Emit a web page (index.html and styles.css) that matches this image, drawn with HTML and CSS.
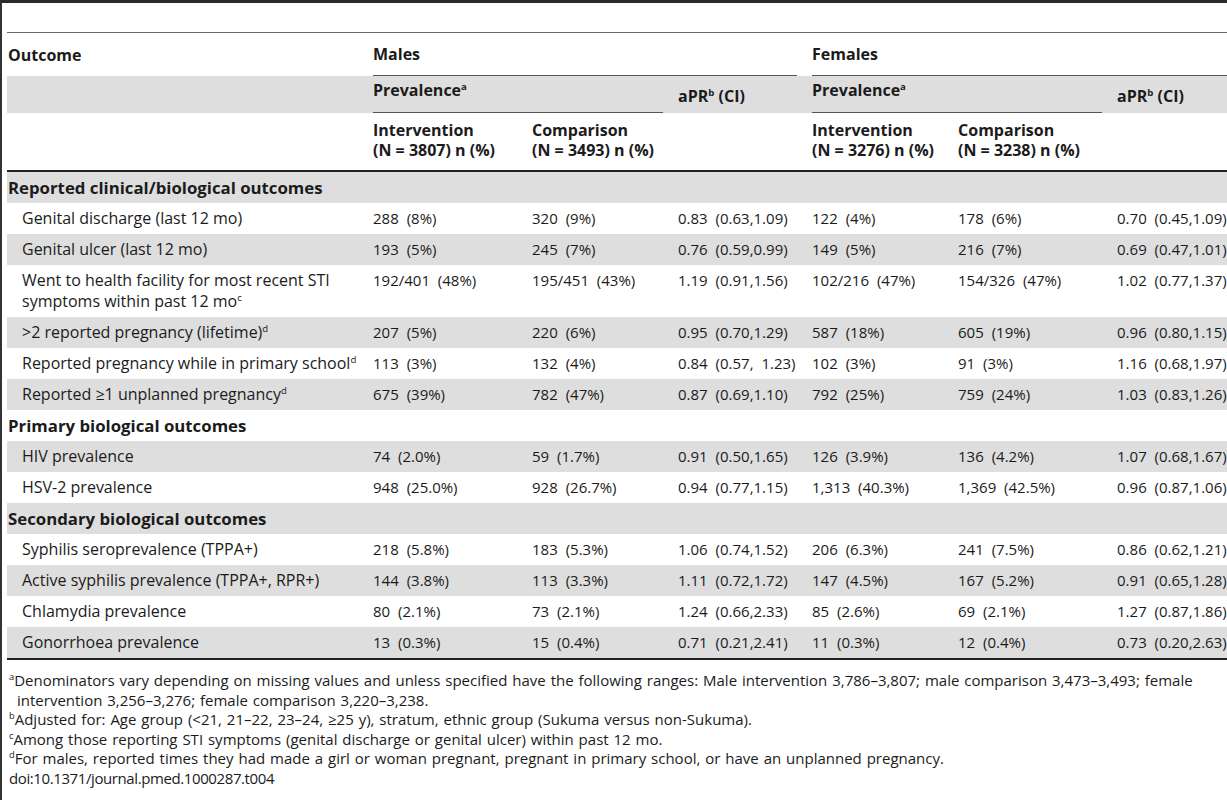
FILE: index.html
```html
<!DOCTYPE html>
<html>

<head>
    <meta charset="utf-8" />
    <title>Table 4</title>
    <link rel="stylesheet" href="styles.css">
</head>

<body>
    <div class="sheet">
        <table class="tbl">
            <colgroup>
                <col class="c-out">
                <col class="c-int">
                <col class="c-cmp">
                <col class="c-apr">
                <col class="c-int2">
                <col class="c-cmp2">
                <col class="c-apr2">
            </colgroup>
            <thead>
                <tr class="head-1">
                    <th class="outcome">Outcome</th>
                    <th colspan="3"><div class="grp">Males</div></th>
                    <th colspan="3"><div class="grp last">Females</div></th>
                </tr>
                <tr class="head-2">
                    <th></th>
                    <th colspan="2"><div class="grp sub">Prevalence<sup>a</sup></div></th>
                    <th class="apr">aPR<sup>b</sup> (CI)</th>
                    <th colspan="2"><div class="grp sub">Prevalence<sup>a</sup></div></th>
                    <th class="apr">aPR<sup>b</sup> (CI)</th>
                </tr>
                <tr class="head-3">
                    <th></th>
                    <th>Intervention<br>(N = 3807) n (%)</th>
                    <th>Comparison<br>(N = 3493) n (%)</th>
                    <th></th>
                    <th>Intervention<br>(N = 3276) n (%)</th>
                    <th>Comparison<br>(N = 3238) n (%)</th>
                    <th></th>
                </tr>
            </thead>
            <tbody>
                <tr class="section"><td colspan="7">Reported clinical/biological outcomes</td></tr>
                <tr>
                    <td class="label">Genital discharge (last 12 mo)</td>
                    <td>288 (8%)</td><td>320 (9%)</td><td>0.83 (0.63,1.09)</td>
                    <td>122 (4%)</td><td>178 (6%)</td><td>0.70 (0.45,1.09)</td>
                </tr>
                <tr>
                    <td class="label">Genital ulcer (last 12 mo)</td>
                    <td>193 (5%)</td><td>245 (7%)</td><td>0.76 (0.59,0.99)</td>
                    <td>149 (5%)</td><td>216 (7%)</td><td>0.69 (0.47,1.01)</td>
                </tr>
                <tr>
                    <td class="label">Went to health facility for most recent STI symptoms within past 12 mo<sup>c</sup></td>
                    <td>192/401 (48%)</td><td>195/451 (43%)</td><td>1.19 (0.91,1.56)</td>
                    <td>102/216 (47%)</td><td>154/326 (47%)</td><td>1.02 (0.77,1.37)</td>
                </tr>
                <tr>
                    <td class="label">&gt;2 reported pregnancy (lifetime)<sup>d</sup></td>
                    <td>207 (5%)</td><td>220 (6%)</td><td>0.95 (0.70,1.29)</td>
                    <td>587 (18%)</td><td>605 (19%)</td><td>0.96 (0.80,1.15)</td>
                </tr>
                <tr>
                    <td class="label">Reported pregnancy while in primary school<sup>d</sup></td>
                    <td>113 (3%)</td><td>132 (4%)</td><td>0.84 (0.57, 1.23)</td>
                    <td>102 (3%)</td><td>91 (3%)</td><td>1.16 (0.68,1.97)</td>
                </tr>
                <tr>
                    <td class="label">Reported ≥1 unplanned pregnancy<sup>d</sup></td>
                    <td>675 (39%)</td><td>782 (47%)</td><td>0.87 (0.69,1.10)</td>
                    <td>792 (25%)</td><td>759 (24%)</td><td>1.03 (0.83,1.26)</td>
                </tr>
                <tr class="section"><td colspan="7">Primary biological outcomes</td></tr>
                <tr>
                    <td class="label">HIV prevalence</td>
                    <td>74 (2.0%)</td><td>59 (1.7%)</td><td>0.91 (0.50,1.65)</td>
                    <td>126 (3.9%)</td><td>136 (4.2%)</td><td>1.07 (0.68,1.67)</td>
                </tr>
                <tr>
                    <td class="label">HSV-2 prevalence</td>
                    <td>948 (25.0%)</td><td>928 (26.7%)</td><td>0.94 (0.77,1.15)</td>
                    <td>1,313 (40.3%)</td><td>1,369 (42.5%)</td><td>0.96 (0.87,1.06)</td>
                </tr>
                <tr class="section"><td colspan="7">Secondary biological outcomes</td></tr>
                <tr>
                    <td class="label">Syphilis seroprevalence (TPPA+)</td>
                    <td>218 (5.8%)</td><td>183 (5.3%)</td><td>1.06 (0.74,1.52)</td>
                    <td>206 (6.3%)</td><td>241 (7.5%)</td><td>0.86 (0.62,1.21)</td>
                </tr>
                <tr>
                    <td class="label">Active syphilis prevalence (TPPA+, RPR+)</td>
                    <td>144 (3.8%)</td><td>113 (3.3%)</td><td>1.11 (0.72,1.72)</td>
                    <td>147 (4.5%)</td><td>167 (5.2%)</td><td>0.91 (0.65,1.28)</td>
                </tr>
                <tr>
                    <td class="label">Chlamydia prevalence</td>
                    <td>80 (2.1%)</td><td>73 (2.1%)</td><td>1.24 (0.66,2.33)</td>
                    <td>85 (2.6%)</td><td>69 (2.1%)</td><td>1.27 (0.87,1.86)</td>
                </tr>
                <tr>
                    <td class="label">Gonorrhoea prevalence</td>
                    <td>13 (0.3%)</td><td>15 (0.4%)</td><td>0.71 (0.21,2.41)</td>
                    <td>11 (0.3%)</td><td>12 (0.4%)</td><td>0.73 (0.20,2.63)</td>
                </tr>
            </tbody>
        </table>

        <div class="notes">
            <p><sup>a</sup>Denominators vary depending on missing values and unless specified have the following ranges: Male intervention 3,786–3,807; male comparison 3,473–3,493; female intervention 3,256–3,276; female comparison 3,220–3,238.</p>
            <p><sup>b</sup>Adjusted for: Age group (&lt;21, 21–22, 23–24, ≥25 y), stratum, ethnic group (Sukuma versus non-Sukuma).</p>
            <p><sup>c</sup>Among those reporting STI symptoms (genital discharge or genital ulcer) within past 12 mo.</p>
            <p><sup>d</sup>For males, reported times they had made a girl or woman pregnant, pregnant in primary school, or have an unplanned pregnancy.</p>
            <p class="doi">doi:10.1371/journal.pmed.1000287.t004</p>
        </div>
    </div>
</body>

</html>
```

FILE: styles.css
```css
body {
    margin: 0;
    background: #fff;
    color: #1b1b1b;
    font-family: "Open Sans", "DejaVu Sans", sans-serif;
}

.sheet {
    border-top: 3px solid #2a2a2a;
    border-left: 2px solid #333;
    padding: 29px 0 0 5px;
    min-height: 800px;
    box-sizing: border-box;
}

.tbl {
    width: 1220px;
    table-layout: fixed;
    border-collapse: separate;
    border-spacing: 0;
    font-size: 16px;
}

.c-out { width: 366px; }
.c-int { width: 159px; }
.c-cmp { width: 146px; }
.c-apr { width: 134px; }
.c-int2 { width: 146px; }
.c-cmp2 { width: 159px; }
.c-apr2 { width: 110px; }

th {
    text-align: left;
    font-weight: bold;
    padding: 0;
    vertical-align: bottom;
}

sup {
    font-size: 0.6em;
    line-height: 0;
    vertical-align: baseline;
    position: relative;
    top: -0.6em;
}

/* header rows */
.head-1 th {
    border-top: 1px solid #666;
    line-height: 18px;
}

.head-1 .outcome {
    vertical-align: middle;
    padding-left: 1px;
}

.grp {
    padding: 12px 0 12px;
    margin-right: 15px;
    border-bottom: 1px solid #555;
}

.grp.last {
    margin-right: 0;
}

.head-2 th {
    background: #dedede;
    line-height: 18px;
}

.grp.sub {
    padding: 5px 0 13px;
}

.head-2 .apr {
    padding-bottom: 8px;
}

.head-3 th {
    line-height: 20px;
    padding: 7px 0 10px;
    border-bottom: 2px solid #222;
}

/* body rows */
td {
    padding: 5px 0;
    font-size: 15px;
    line-height: 21px;
    word-spacing: 4px;
    vertical-align: top;
    white-space: nowrap;
}

.tbl tbody tr:nth-child(odd) td {
    background: #dedede;
}

.tbl tbody tr:last-child td {
    border-bottom: 2px solid #222;
}

.section td {
    font-size: 16.8px;
    font-weight: bold;
    word-spacing: 0;
    padding-left: 1px;
}

td.label {
    font-size: 16px;
    word-spacing: 0;
    padding-left: 15px;
    padding-right: 8px;
    white-space: normal;
}

/* footnotes */
.notes {
    padding: 11px 0 0 2px;
    font-size: 15px;
    line-height: 19.5px;
    word-spacing: 1px;
}

.notes p {
    margin: 0;
    padding-left: 8px;
    text-indent: -8px;
}

.notes sup {
    font-size: 0.62em;
}

.notes .doi {
    padding-left: 0;
    text-indent: 0;
    letter-spacing: -0.4px;
}
```
